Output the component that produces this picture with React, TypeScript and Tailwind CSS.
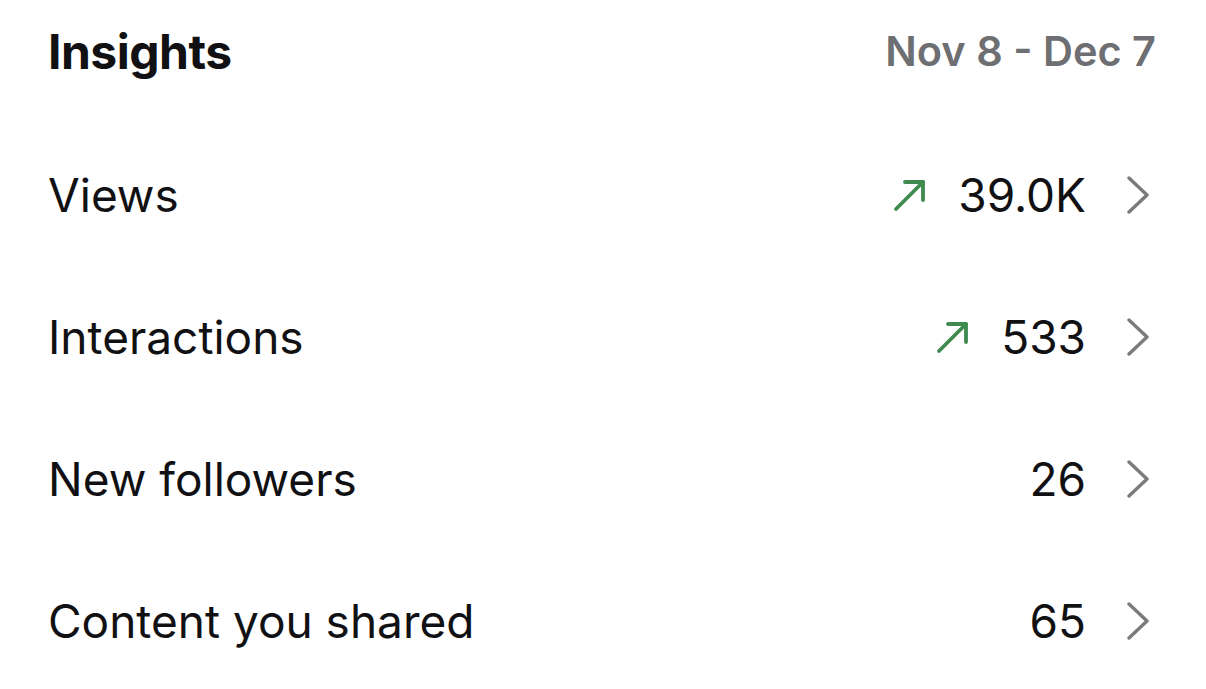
const rows = [
  { label: 'Views', value: '39.0K', up: true },
  { label: 'Interactions', value: '533', up: true },
  { label: 'New followers', value: '26', up: false },
  { label: 'Content you shared', value: '65', up: false },
];

function UpArrow() {
  return (
    <svg width="36" height="36" viewBox="0 0 36 36" fill="none" stroke="#3f8a4f" strokeWidth="3.8" strokeLinecap="round" strokeLinejoin="round">
      <path d="M4 32 L31 5" />
      <path d="M13 5 H31 V23" />
    </svg>
  );
}

function Chevron() {
  return (
    <svg width="24" height="38" viewBox="0 0 24 38" fill="none" stroke="#7b7b7d" strokeWidth="3.4" strokeLinecap="round" strokeLinejoin="round">
      <path d="M3 2 L21 19 L3 36" />
    </svg>
  );
}

export default function App() {
  return (
    <div className="h-[689px] w-[1206px] bg-white pl-[48px] pr-[50px] text-[#111113]" style={{ fontFamily: 'Inter, "Noto Sans", sans-serif' }}>
      <div className="flex h-[124px] items-start justify-between pt-[24px]">
        <h1 className="text-[48px] font-bold leading-[56px] tracking-[-0.5px]">Insights</h1>
        <span className="text-[41.5px] font-semibold leading-[54px] text-[#6d6f73]">Nov 8 - Dec 7</span>
      </div>
      {rows.map((row) => (
        <div key={row.label} className="flex h-[142px] items-center justify-between">
          <span className="text-[46px] leading-none">{row.label}</span>
          <div className="flex items-center">
            {row.up && (
              <span className="mr-[30px]">
                <UpArrow />
              </span>
            )}
            <span className="text-[46px] leading-none">{row.value}</span>
            <span className="ml-[40px] mr-[6px]">
              <Chevron />
            </span>
          </div>
        </div>
      ))}
    </div>
  );
}
